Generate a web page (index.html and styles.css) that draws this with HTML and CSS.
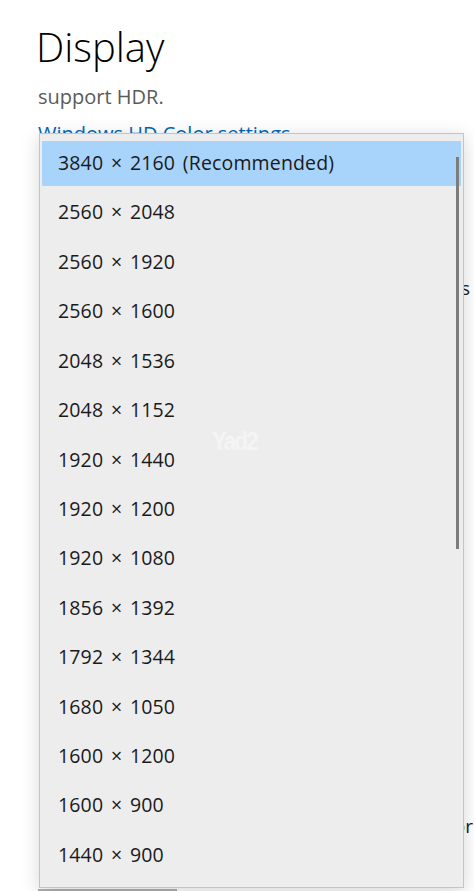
FILE: index.html
```html
<!DOCTYPE html>
<html lang="en">
  <head>
    <meta charset="utf-8" />
    <meta name="viewport" content="width=device-width, initial-scale=1" />
    <title>Display</title>
    <link rel="stylesheet" href="styles.css">
  </head>
  <body>
    <div class="page">
      <h1 class="page-title">Display</h1>
      <p class="page-note">support HDR.</p>
      <a class="page-link" href="#">Windows HD Color settings</a>

      <!-- settings rows that sit behind the open list -->
      <p class="behind-row behind-scale">items</p>
      <p class="behind-row behind-orient">or</p>
      <div class="behind-box"></div>
    </div>

    <!-- Resolution dropdown, open -->
    <div class="dropdown">
      <ul class="dropdown-list">
        <li class="dropdown-item selected">3840 × 2160 (Recommended)</li>
        <li class="dropdown-item">2560 × 2048</li>
        <li class="dropdown-item">2560 × 1920</li>
        <li class="dropdown-item">2560 × 1600</li>
        <li class="dropdown-item">2048 × 1536</li>
        <li class="dropdown-item">2048 × 1152</li>
        <li class="dropdown-item">1920 × 1440</li>
        <li class="dropdown-item">1920 × 1200</li>
        <li class="dropdown-item">1920 × 1080</li>
        <li class="dropdown-item">1856 × 1392</li>
        <li class="dropdown-item">1792 × 1344</li>
        <li class="dropdown-item">1680 × 1050</li>
        <li class="dropdown-item">1600 × 1200</li>
        <li class="dropdown-item">1600 × 900</li>
        <li class="dropdown-item">1440 × 900</li>
      </ul>
      <div class="dropdown-thumb"></div>
      <span class="watermark">Yad2</span>
    </div>
  </body>
</html>
```

FILE: styles.css
```css
html {
  background-color: #ffffff;
}

body {
  margin: 0;
  font-family: 'Open Sans', 'Noto Sans', sans-serif;
  color: #1b1b1b;
  background-color: #ffffff;
  overflow: hidden;
  height: 891px;
}

.page {
  padding: 19px 0 0 36px;
  display: flex;
  flex-direction: column;
  align-items: flex-start;
}

.page-title {
  margin: 0;
  font-size: 40px;
  font-weight: 300;
  line-height: 56px;
  color: #000000;
}

.page-note {
  margin: 9px 0 0 2px;
  font-size: 20px;
  line-height: 26px;
  color: #5a5a5a;
}

.page-link {
  margin: 11px 0 0 2px;
  font-size: 20px;
  line-height: 26px;
  color: #0067b8;
  text-decoration: none;
}

/* rows further down; only their last letters peek out past the list */
.behind-row {
  margin: 0;
  font-size: 19px;
  line-height: 26px;
  color: #1b1b1b;
  white-space: nowrap;
  align-self: flex-end;
}

.behind-scale {
  margin-top: 128px;
  margin-right: 4px;
}

.behind-orient {
  margin-top: 512px;
  margin-right: 1px;
}

.behind-box {
  margin-top: 50px;
  margin-left: 2px;
  width: 135px;
  height: 32px;
  border: 2px solid #b0b0b0;
}

.dropdown {
  position: absolute;
  left: 39px;
  top: 133px;
  width: 423px;
  height: 753px;
  background-color: #ededed;
  border: 1px solid #c4c4c4;
  box-shadow: 0 4px 18px rgba(0, 0, 0, 0.16);
  overflow: hidden;
}

.dropdown-list {
  list-style: none;
  margin: 0;
  padding: 7px 2px 0 2px;
  display: flex;
  flex-direction: column;
  gap: 4.43px;
}

.dropdown-item {
  height: 45px;
  line-height: 43px;
  padding-left: 16px;
  font-size: 19.5px;
  letter-spacing: 0.15px;
  word-spacing: 2.5px;
  color: #1a1a1a;
  white-space: nowrap;
}

.dropdown-item.selected {
  background-color: #a8d4fb;
}

.dropdown-thumb {
  position: absolute;
  left: 416px;
  top: 23px;
  width: 3px;
  height: 392px;
  background-color: #7c7c7c;
}

.watermark {
  position: absolute;
  left: 172px;
  top: 292px;
  font-family: 'Liberation Sans', sans-serif;
  font-weight: 700;
  font-size: 26px;
  letter-spacing: -2px;
  transform: scaleX(0.85);
  transform-origin: left top;
  color: rgba(255, 255, 255, 0.45);
}
```
